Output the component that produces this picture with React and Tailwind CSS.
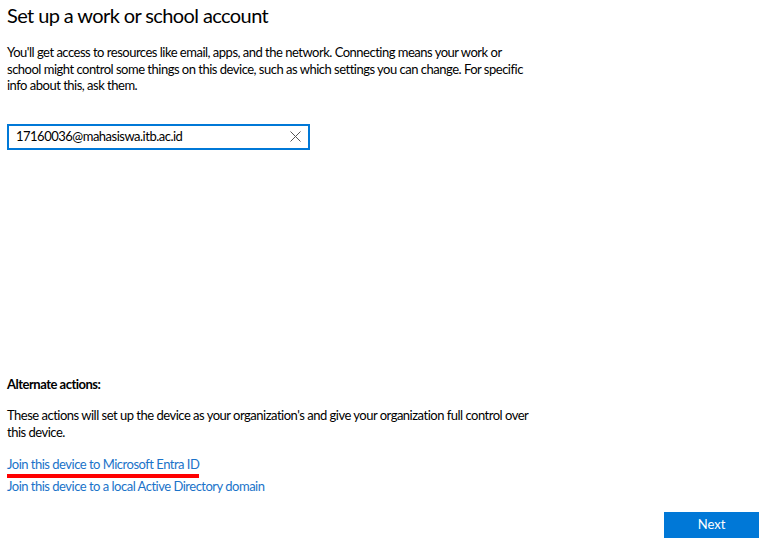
import React, { useState } from 'react';

export default function App() {
  const [email, setEmail] = useState('17160036@mahasiswa.itb.ac.id');

  return (
    <div
      className="h-[545px] w-[766px] bg-white text-[#000] flex flex-col px-[7px] pb-[7px] overflow-hidden"
      style={{ fontFamily: '"Lato", "Noto Sans", sans-serif' }}
    >
      {/* Header + description */}
      <h1 className="text-[20px] leading-[28px] mt-[1px] font-normal tracking-[-0.6px]">Set up a work or school account</h1>
      <p className="text-[13px] leading-[16.5px] mt-[15px] tracking-[-0.5px] whitespace-nowrap">
        You'll get access to resources like email, apps, and the network. Connecting means your work or
        <br />
        school might control some things on this device, such as which settings you can change. For specific
        <br />
        info about this, ask them.
      </p>

      <div className="mt-[30px] w-[303px] h-[26px] border-2 border-[#0078d7] flex items-center pl-[7px] pr-[6px]">
        <input
          value={email}
          onChange={(e) => setEmail(e.target.value)}
          className="flex-1 min-w-0 outline-none text-[13px] tracking-[-0.5px] text-[#000] bg-transparent"
        />
        <button onClick={() => setEmail('')} className="w-[14px] h-[14px] flex items-center justify-center text-[#555]">
          <svg width="11" height="11" viewBox="0 0 11 11" stroke="currentColor" strokeWidth="1" fill="none">
            <path d="M0.5 0.5 L10.5 10.5 M10.5 0.5 L0.5 10.5" />
          </svg>
        </button>
      </div>

      <div className="flex-1" />

      {/* Alternate actions */}
      <div className="text-[13px] leading-[16.5px] tracking-[-0.5px]">
        <div className="font-bold">Alternate actions:</div>
        <p className="mt-[15px] whitespace-nowrap">
          These actions will set up the device as your organization's and give your organization full control over
          <br />
          this device.
        </p>
        <div className="mt-[16px] flex flex-col">
          <a href="#" className="text-[#1a73c9] w-fit">Join this device to Microsoft Entra ID</a>
          <div className="h-[4px] w-[192px] bg-[#ff0000] mt-[1px]" />
          <a href="#" className="text-[#1a73c9] w-fit">Join this device to a local Active Directory domain</a>
        </div>
      </div>

      <div className="flex justify-end mt-[18px]">
        <button className="w-[95px] h-[26px] bg-[#0078d7] text-white text-[13px]">Next</button>
      </div>
    </div>
  );
}
